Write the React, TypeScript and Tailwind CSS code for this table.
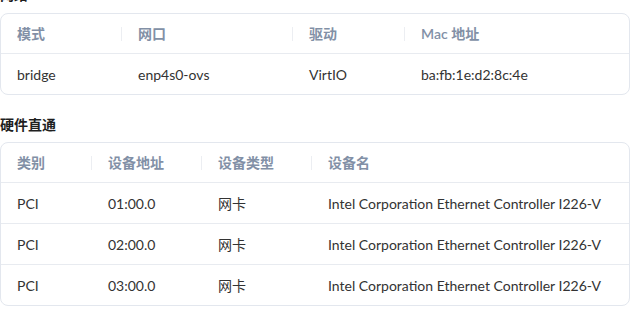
import React from 'react';

interface InfoTableProps {
  cols: string;
  headers: string[];
  rows: string[][];
}

const InfoTable: React.FC<InfoTableProps> = ({ cols, headers, rows }) => {
  return (
    <div className="w-[630px] border border-[#e3e7ee] rounded-[8px] overflow-hidden bg-white">
      <div className={`grid ${cols} h-[39px]`}>
        {headers.map((h, i) => (
          <div key={h} className="flex items-center justify-between pl-4">
            <span className="text-[14px] font-semibold text-[#8290a6]">{h}</span>
            {i < headers.length - 1 && <span className="w-px h-[14px] bg-[#eceef2]" />}
          </div>
        ))}
      </div>
      {rows.map((r, ri) => (
        <div key={ri} className={`grid ${cols} h-[41px] border-t border-[#e8ebf0]`}>
          {r.map((c, ci) => (
            <div key={ci} className="flex items-center pl-4 text-[14px] text-[#333]">
              {c}
            </div>
          ))}
        </div>
      ))}
    </div>
  );
};

export default function App() {
  return (
    <div
      className="w-[644px] h-[324px] overflow-hidden bg-white"
      style={{ fontFamily: 'Lato, "Noto Sans CJK SC", sans-serif' }}
    >
      <div className="-mt-[16px]">
        <h3 className="text-[14px] leading-[22px] font-bold text-[#1f1f1f] mb-[7px]">网络</h3>
        <InfoTable
          cols="grid-cols-[121px_171px_112px_1fr]"
          headers={['模式', '网口', '驱动', 'Mac 地址']}
          rows={[['bridge', 'enp4s0-ovs', 'VirtIO', 'ba:fb:1e:d2:8c:4e']]}
        />
        <h3 className="mt-[19px] text-[14px] leading-[22px] font-bold text-[#1f1f1f] mb-[6px]">硬件直通</h3>
        <InfoTable
          cols="grid-cols-[91px_110px_110px_1fr]"
          headers={['类别', '设备地址', '设备类型', '设备名']}
          rows={[
            ['PCI', '01:00.0', '网卡', 'Intel Corporation Ethernet Controller I226-V'],
            ['PCI', '02:00.0', '网卡', 'Intel Corporation Ethernet Controller I226-V'],
            ['PCI', '03:00.0', '网卡', 'Intel Corporation Ethernet Controller I226-V'],
          ]}
        />
      </div>
    </div>
  );
}
